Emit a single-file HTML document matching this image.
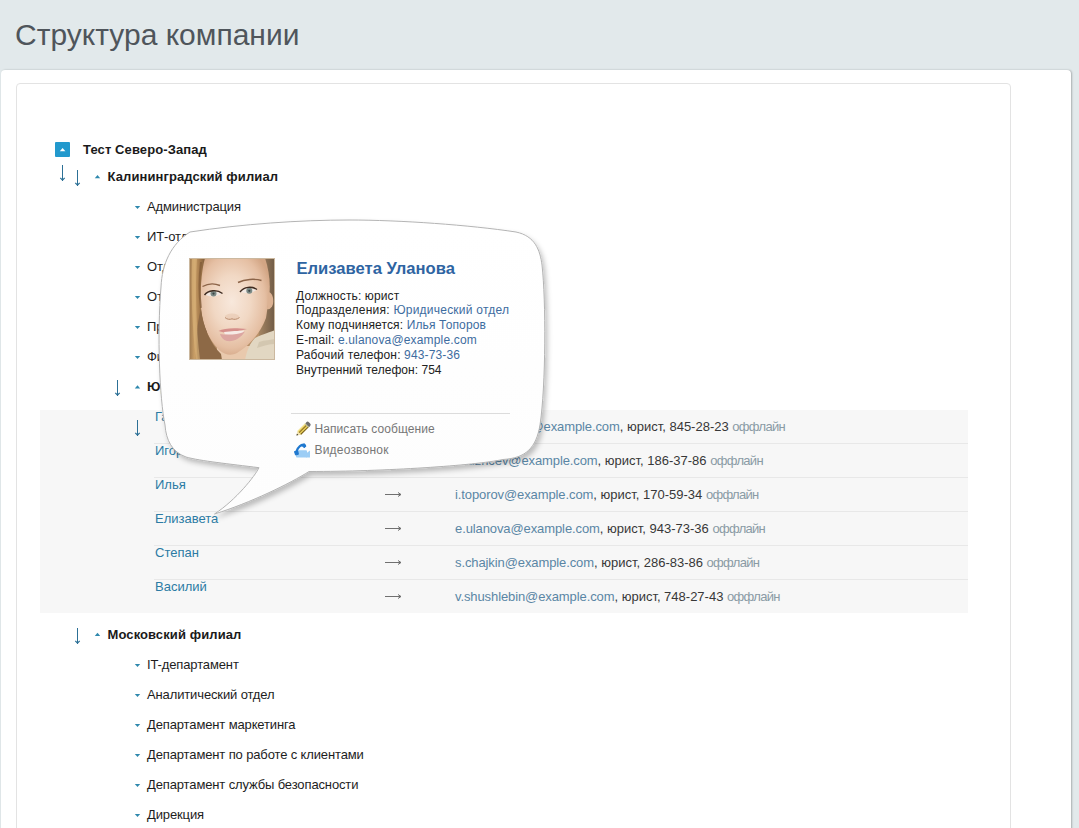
<!DOCTYPE html>
<html><head><meta charset="utf-8">
<style>
*{margin:0;padding:0;box-sizing:border-box}
html,body{width:1079px;height:828px;overflow:hidden;background:#e2e9eb;font-family:"Liberation Sans",sans-serif;position:relative}
.abs{position:absolute;white-space:nowrap}
.t{color:#1d1d1d;letter-spacing:-0.13px}
.b{font-weight:bold;color:#1a1a1a;letter-spacing:0.1px}
.nm{color:#2c7ba4}
.em{color:#383838}
.em a{color:#5a86a5;text-decoration:none;letter-spacing:-0.1px}
.em i{font-style:normal;color:#8a9ba5;letter-spacing:-0.7px}
.pl{color:#222}
.pl a{color:#3d6c9f;text-decoration:none}
</style></head><body>
<div class="abs " style="left:15px;top:17.70px;font-size:30px;line-height:34px;color:#4f555b">Структура компании</div>
<div class="abs" style="left:1px;top:70px;width:1070px;height:800px;background:#fff;border-radius:4px;box-shadow:1px 0 2px rgba(0,0,0,.25)"></div>
<div class="abs" style="left:16px;top:83px;width:995px;height:800px;border:1px solid #e3e3e3;border-radius:4px"></div>
<div class="abs" style="left:55px;top:142px;width:15px;height:15px;background:#2299cd;border-radius:1px"></div>
<div class="abs t b" style="left:83px;top:142.00px;font-size:13px;line-height:15px;">Тест Северо-Запад</div>
<div class="abs t b" style="left:107.5px;top:169.00px;font-size:13px;line-height:15px;">Калининградский филиал</div>
<div class="abs t" style="left:147px;top:199.00px;font-size:13px;line-height:15px;">Администрация</div>
<div class="abs t" style="left:147px;top:229.00px;font-size:13px;line-height:15px;">ИТ-отдел</div>
<div class="abs t" style="left:147px;top:259.00px;font-size:13px;line-height:15px;">Отдел кадров</div>
<div class="abs t" style="left:147px;top:289.00px;font-size:13px;line-height:15px;">Отдел продаж</div>
<div class="abs t" style="left:147px;top:319.00px;font-size:13px;line-height:15px;">Производственный отдел</div>
<div class="abs t" style="left:147px;top:349.00px;font-size:13px;line-height:15px;">Финансовый отдел</div>
<div class="abs t b" style="left:147px;top:379.00px;font-size:13px;line-height:15px;">Юридический отдел</div>
<div class="abs" style="left:40px;top:410px;width:928px;height:203px;background:#f7f7f7"></div>
<div class="abs nm" style="left:155px;top:409.00px;font-size:13px;line-height:15px;">Галина</div>
<div class="abs em" style="left:455px;top:419.00px;font-size:13px;line-height:15px;"><a>g.shestakova@example.com</a>, юрист, 845-28-23 <i>оффлайн</i></div>
<div class="abs" style="left:154px;top:443px;width:814px;height:1px;background:#e8e8e8"></div>
<div class="abs nm" style="left:155px;top:443.00px;font-size:13px;line-height:15px;">Игорь</div>
<div class="abs em" style="left:455px;top:453.00px;font-size:13px;line-height:15px;"><a>i.kuzncev@example.com</a>, юрист, 186-37-86 <i>оффлайн</i></div>
<div class="abs" style="left:154px;top:477px;width:814px;height:1px;background:#e8e8e8"></div>
<div class="abs nm" style="left:155px;top:477.00px;font-size:13px;line-height:15px;">Илья</div>
<div class="abs em" style="left:455px;top:487.00px;font-size:13px;line-height:15px;"><a>i.toporov@example.com</a>, юрист, 170-59-34 <i>оффлайн</i></div>
<div class="abs" style="left:154px;top:511px;width:814px;height:1px;background:#e8e8e8"></div>
<div class="abs nm" style="left:155px;top:511.00px;font-size:13px;line-height:15px;">Елизавета</div>
<div class="abs em" style="left:455px;top:521.00px;font-size:13px;line-height:15px;"><a>e.ulanova@example.com</a>, юрист, 943-73-36 <i>оффлайн</i></div>
<div class="abs" style="left:154px;top:545px;width:814px;height:1px;background:#e8e8e8"></div>
<div class="abs nm" style="left:155px;top:545.00px;font-size:13px;line-height:15px;">Степан</div>
<div class="abs em" style="left:455px;top:555.00px;font-size:13px;line-height:15px;"><a>s.chajkin@example.com</a>, юрист, 286-83-86 <i>оффлайн</i></div>
<div class="abs" style="left:154px;top:579px;width:814px;height:1px;background:#e8e8e8"></div>
<div class="abs nm" style="left:155px;top:579.00px;font-size:13px;line-height:15px;">Василий</div>
<div class="abs em" style="left:455px;top:589.00px;font-size:13px;line-height:15px;"><a>v.shushlebin@example.com</a>, юрист, 748-27-43 <i>оффлайн</i></div>
<div class="abs t b" style="left:107.5px;top:627.00px;font-size:13px;line-height:15px;">Московский филиал</div>
<div class="abs t" style="left:147px;top:657.00px;font-size:13px;line-height:15px;">IT-департамент</div>
<div class="abs t" style="left:147px;top:687.00px;font-size:13px;line-height:15px;">Аналитический отдел</div>
<div class="abs t" style="left:147px;top:717.00px;font-size:13px;line-height:15px;">Департамент маркетинга</div>
<div class="abs t" style="left:147px;top:747.00px;font-size:13px;line-height:15px;">Департамент по работе с клиентами</div>
<div class="abs t" style="left:147px;top:777.00px;font-size:13px;line-height:15px;">Департамент службы безопасности</div>
<div class="abs t" style="left:147px;top:807.00px;font-size:13px;line-height:15px;">Дирекция</div>
<svg class="abs" style="left:0;top:0" width="1079" height="828">
 <g fill="none" stroke="#2c7096" stroke-width="1">
  <path d="M62.5 165.0V181.0"/><path d="M60.3 177.9L62.5 180.1L64.7 177.9" stroke-width="1.25"/>
  <path d="M77.5 170.0V186.0"/><path d="M75.3 182.9L77.5 185.1L79.7 182.9" stroke-width="1.25"/>
  <path d="M117.5 380.0V396.0"/><path d="M115.3 392.9L117.5 395.1L119.7 392.9" stroke-width="1.25"/>
  <path d="M137.5 420.0V436.0"/><path d="M135.3 432.9L137.5 435.1L139.7 432.9" stroke-width="1.25"/>
  <path d="M77.5 628.0V644.0"/><path d="M75.3 640.9L77.5 643.1L79.7 640.9" stroke-width="1.25"/>
 </g>
 <g fill="none" stroke="#707070" stroke-width="1">
  <path d="M385 426.5H401M398 424.5L401 426.5L398 428.5"/>
  <path d="M385 460.5H401M398 458.5L401 460.5L398 462.5"/>
  <path d="M385 494.5H401M398 492.5L401 494.5L398 496.5"/>
  <path d="M385 528.5H401M398 526.5L401 528.5L398 530.5"/>
  <path d="M385 562.5H401M398 560.5L401 562.5L398 564.5"/>
  <path d="M385 596.5H401M398 594.5L401 596.5L398 598.5"/>
 </g>
</svg>
<svg class="abs" style="left:0;top:0" width="1079" height="828"><g fill="#2e88ad"><path d="M94.8 178.2L97.5 175.0L100.2 178.2Z"/><path d="M134.8 388.4L137.5 385.2L140.20000000000002 388.4Z"/><path d="M94.8 636L97.5 632.8L100.2 636Z"/><path d="M134.8 205.9L137.5 209.1L140.20000000000002 205.9Z"/><path d="M134.8 663.9L137.5 667.1L140.20000000000002 663.9Z"/><path d="M134.8 235.9L137.5 239.1L140.20000000000002 235.9Z"/><path d="M134.8 693.9L137.5 697.1L140.20000000000002 693.9Z"/><path d="M134.8 265.9L137.5 269.09999999999997L140.20000000000002 265.9Z"/><path d="M134.8 723.9L137.5 727.1L140.20000000000002 723.9Z"/><path d="M134.8 295.9L137.5 299.09999999999997L140.20000000000002 295.9Z"/><path d="M134.8 753.9L137.5 757.1L140.20000000000002 753.9Z"/><path d="M134.8 325.9L137.5 329.09999999999997L140.20000000000002 325.9Z"/><path d="M134.8 783.9L137.5 787.1L140.20000000000002 783.9Z"/><path d="M134.8 355.9L137.5 359.09999999999997L140.20000000000002 355.9Z"/><path d="M134.8 813.9L137.5 817.1L140.20000000000002 813.9Z"/></g><path d="M59.8 151.2L62.6 148L65.4 151.2Z" fill="#fff"/></svg>
<svg class="abs" style="left:0;top:0" width="1079" height="828">
<defs>
 <filter id="sh" x="-10%" y="-10%" width="130%" height="130%">
  <feDropShadow dx="2.5" dy="3.5" stdDeviation="2.6" flood-color="#000" flood-opacity="0.24"/>
 </filter>
 <linearGradient id="bg" x1="0" y1="0" x2="0" y2="1">
  <stop offset="0" stop-color="#ffffff"/><stop offset="1" stop-color="#fdfdfd"/>
 </linearGradient>
</defs>
<path filter="url(#sh)" fill="url(#bg)" stroke="#b4b4b4" stroke-width="1"
 d="M190 232C242 224 300 220 349 220C400 220 470 225 516 232C535 236 540 250 542 265C546 300 546 385 540 425C536 448 526 458 503 459.5C475 465.5 385 471.5 309 471.5C290 483.5 250 503 214.5 514C236 500 255 476 259 467.7C230 464 200 461 186 457C172 452 166 440 165 425C159.5 398 157 335 161 287C162 264 171 244 190 232Z"/>
</svg>
<svg class="abs" style="left:189px;top:258px" width="86" height="102" viewBox="0 0 86 102">
<defs>
 <radialGradient id="skin" cx="0.45" cy="0.45" r="0.6">
  <stop offset="0" stop-color="#f8e8dc"/><stop offset="0.45" stop-color="#f1d8c4"/><stop offset="0.8" stop-color="#e5bfa3"/><stop offset="1" stop-color="#d2a584"/>
 </radialGradient>
 <linearGradient id="hairL" x1="0" y1="0" x2="1" y2="0">
  <stop offset="0" stop-color="#9a764e"/><stop offset="0.3" stop-color="#c99e66"/><stop offset="0.6" stop-color="#a47a4c"/><stop offset="1" stop-color="#6f5034"/>
 </linearGradient>
 <linearGradient id="hairR" x1="0" y1="0" x2="1" y2="0">
  <stop offset="0" stop-color="#a58563"/><stop offset="1" stop-color="#6f5a45"/>
 </linearGradient>
</defs>
<rect width="86" height="102" fill="#b89068"/>
<path d="M0 0H18V102H0Z" fill="url(#hairL)"/>
<path d="M70 0H86V85H70Z" fill="url(#hairR)"/>
<path d="M28 88H72V102H28Z" fill="#e9c9ad"/>
<path d="M16 0H76C80 12 82 26 80 40L77 60C71 76 60 88 48 95C42 98 36 97 30 92C20 82 14 68 12 52C11 36 12 14 16 0Z" fill="url(#skin)"/>
<path d="M12 50C14 70 22 86 32 96L33 102H9C7 86 7 70 12 50Z" fill="#8d6946"/>
<path d="M66 80C74 76 82 74 86 72V102H56C58 92 61 85 66 80Z" fill="#e2d7c2"/>
<path d="M70 84C76 82 82 82 86 81V86C80 86 74 88 68 90Z" fill="#c9bca4" opacity="0.6"/>
<path d="M79 34C83 34 85 40 84 46C83 50 80 52 78 51Z" fill="#dcb293"/>
<path d="M3 0C2 30 3 70 7 102H11C7 70 6 30 8 0Z" fill="#dcb67c" opacity="0.6"/>
<path d="M12 4C10 20 10 36 12 50" stroke="#7a5534" stroke-width="2" fill="none" opacity="0.6"/>
<path d="M13.5 28.5C19 25.5 26 25.5 31 27.5" stroke="#8c6448" stroke-width="1.4" fill="none"/>
<path d="M49 24.5C56 21 66 20.5 72.5 22.5" stroke="#8c6448" stroke-width="1.4" fill="none"/>
<path d="M16 36.5C19.5 32.5 28 32 33 35.5C28.5 39 20.5 39.5 16 36.5Z" fill="#f2e8e2"/>
<circle cx="24.5" cy="35.6" r="3" fill="#7b8a86"/>
<circle cx="24.5" cy="35.6" r="1.1" fill="#3c4646"/>
<path d="M15.5 37C19 32 28 31 33.5 35.5" stroke="#3f2b20" stroke-width="1.4" fill="none"/>
<path d="M51.5 33.5C55 29.5 63 29 67.5 32C63 35.5 55.5 36 51.5 33.5Z" fill="#f2e8e2"/>
<circle cx="60.3" cy="32.8" r="3" fill="#7b8a86"/>
<circle cx="60.3" cy="32.8" r="1.1" fill="#3c4646"/>
<path d="M51 34C55 28.5 63 28 68 31.5" stroke="#3f2b20" stroke-width="1.4" fill="none"/>
<ellipse cx="43" cy="58.5" rx="7" ry="3" fill="#dcb497" opacity="0.35"/>
<path d="M36 59.5C38 61.5 41 61.8 43 60.8C45 61.8 48 61.5 50.5 59.5" stroke="#b88a6c" stroke-width="1" fill="none"/>
<path d="M29.5 73C35 70 45 69.5 58 71C52 73 44 74 35 74.5Z" fill="#d58f8b"/>
<path d="M35 74C42 73 50 73 55 72.5L53 76.5C46 77.3 40 77.3 36 76.5Z" fill="#f6ebe6"/>
<path d="M31 76C38 77 48 77 56 73.5C52 80 45 84 38 83C34 82 32 79 31 76Z" fill="#dca6a1"/>
<rect x="0.5" y="0.5" width="85" height="101" fill="none" stroke="#cbb89f" stroke-width="1"/>
</svg>
<div class="abs " style="left:296.5px;top:258.55px;font-size:16.6px;line-height:19px;font-weight:bold;color:#2e64a2">Елизавета Уланова</div>
<div class="abs pl" style="left:296px;top:288.64px;font-size:12px;line-height:14px;letter-spacing:0.125px">Должность: юрист</div>
<div class="abs pl" style="left:296px;top:303.44px;font-size:12px;line-height:14px;letter-spacing:0.23px">Подразделения: <a>Юридический отдел</a></div>
<div class="abs pl" style="left:296px;top:318.24px;font-size:12px;line-height:14px;letter-spacing:0.14px">Кому подчиняется: <a>Илья Топоров</a></div>
<div class="abs pl" style="left:296px;top:333.04px;font-size:12px;line-height:14px;letter-spacing:0.16px">E-mail: <a>e.ulanova@example.com</a></div>
<div class="abs pl" style="left:296px;top:347.84px;font-size:12px;line-height:14px;letter-spacing:0.14px">Рабочий телефон: <a>943-73-36</a></div>
<div class="abs pl" style="left:296px;top:362.64px;font-size:12px;line-height:14px;letter-spacing:0.04px">Внутренний телефон: 754</div>
<div class="abs" style="left:291px;top:413px;width:219px;height:1px;background:#dcdcdc"></div>
<svg class="abs" style="left:0;top:0" width="1079" height="828">
<g transform="translate(302.9 429.3) rotate(-44)">
 <path d="M-9 0L-5 -2.6V2.6Z" fill="#f2e3b0"/>
 <path d="M-9 0L-7.3 -1V1Z" fill="#222"/>
 <rect x="-5" y="-2.6" width="10.5" height="5.2" fill="#e9cf58"/>
 <rect x="-5" y="-0.9" width="10.5" height="1.1" fill="#8f7228"/>
 <rect x="-5" y="1.6" width="10.5" height="1" fill="#6d5520"/>
 <rect x="-5" y="-2.6" width="10.5" height="0.9" fill="#f6e9a0"/>
 <rect x="5.2" y="-2.7" width="4" height="5.4" rx="1.8" fill="#6e6e6e"/>
 <rect x="5" y="-2.7" width="1" height="5.4" fill="#c8c8a0"/>
</g>
<g>
 <rect x="296" y="450.3" width="11" height="7.2" rx="1" fill="#9ccdf5"/>
 <path d="M306 453.5L310 450.5V457.5H306Z" fill="#9ccdf5"/>
 <path d="M304.5 445.5C301.5 444 298 446.5 296 452.5" stroke="#1f78cf" stroke-width="2.2" fill="none" stroke-linecap="round"/>
 <path d="M301 444.5L304.5 443.8L306 446.2L304.2 447.8Z" fill="#1f78cf" stroke="#1f78cf" stroke-width="1" stroke-linejoin="round"/>
 <path d="M294.5 451.5L297.8 451L298.4 454.3L295.5 455Z" fill="#1f78cf" stroke="#1f78cf" stroke-width="1" stroke-linejoin="round"/>
</g>
</svg>
<div class="abs " style="left:314.5px;top:422.24px;font-size:12px;line-height:14px;color:#777;letter-spacing:0.08px">Написать сообщение</div>
<div class="abs " style="left:314.5px;top:443.44px;font-size:12px;line-height:14px;color:#777;letter-spacing:0.2px">Видеозвонок</div>
</body></html>
